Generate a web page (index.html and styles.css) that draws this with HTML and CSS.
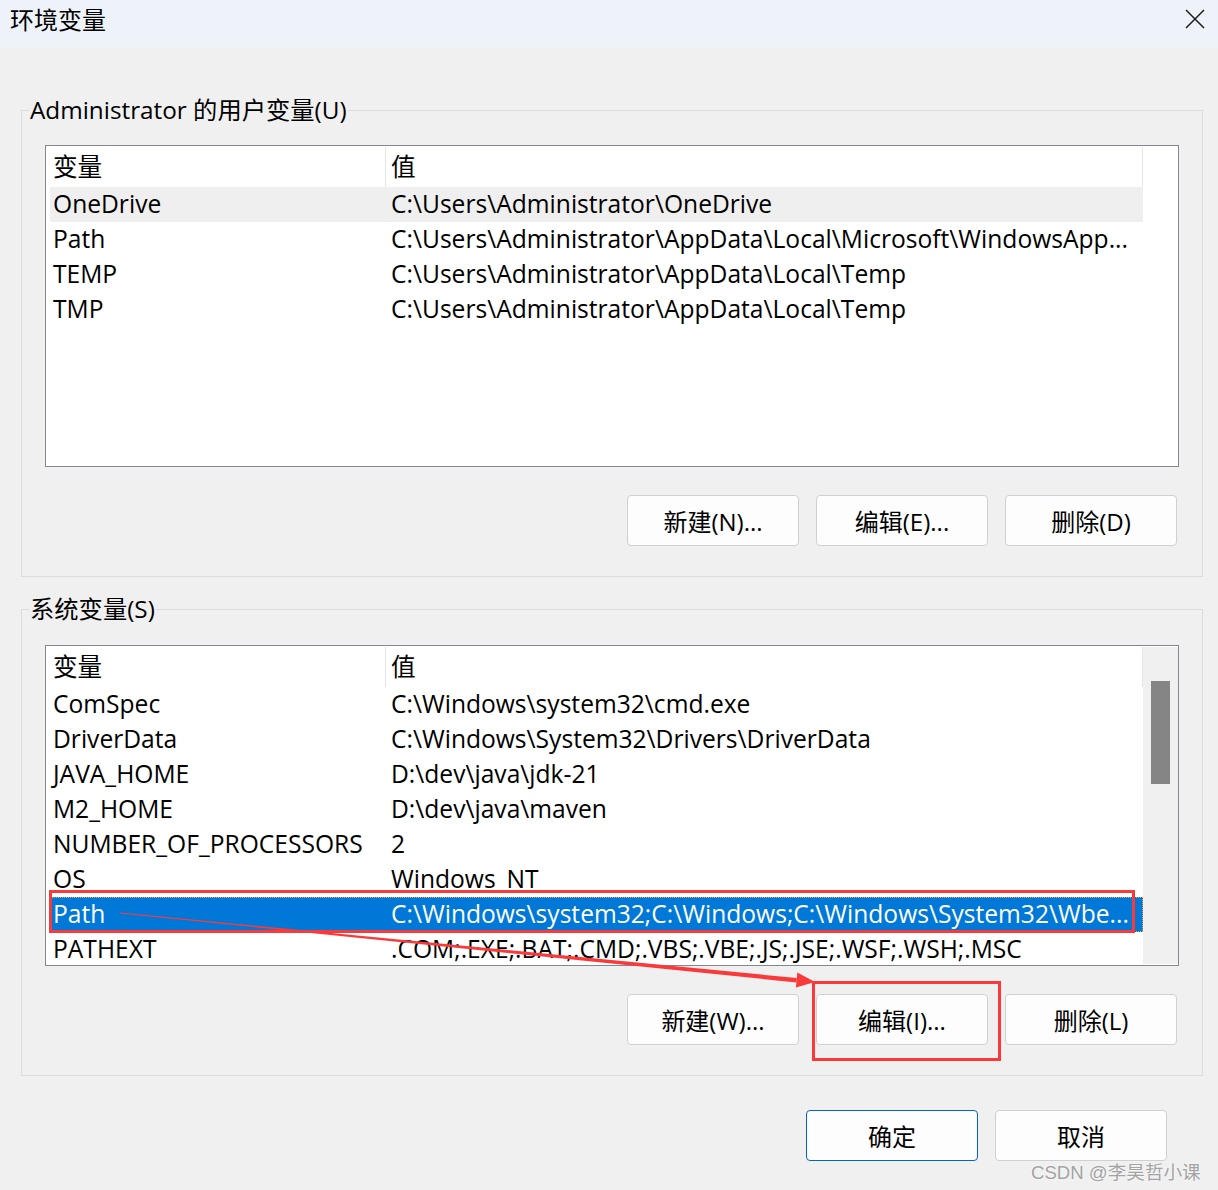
FILE: index.html
```html
<!DOCTYPE html>
<html lang="zh-CN">
<head>
    <meta charset="UTF-8">
    <title>环境变量</title>
    <link rel="stylesheet" href="styles.css">
</head>
<body>
    <div class="titlebar">
        <span class="title">环境变量</span>
        <svg class="close" width="20" height="20" viewBox="0 0 20 20">
            <path d="M1 1 L19 19 M19 1 L1 19" stroke="#1a1a1a" stroke-width="1.5" fill="none"/>
        </svg>
    </div>

    <div class="content">
        <fieldset class="group">
            <legend>Administrator 的用户变量(U)</legend>
            <div class="group-body">
                <div class="list list-user">
                    <div class="list-main">
                        <div class="list-head">
                            <div class="cell">变量</div>
                            <div class="cell cell-val">值</div>
                        </div>
                        <div class="row soft">
                            <div class="cell">OneDrive</div>
                            <div class="cell cell-val">C:\Users\Administrator\OneDrive</div>
                        </div>
                        <div class="row">
                            <div class="cell">Path</div>
                            <div class="cell cell-val">C:\Users\Administrator\AppData\Local\Microsoft\WindowsApp...</div>
                        </div>
                        <div class="row">
                            <div class="cell">TEMP</div>
                            <div class="cell cell-val">C:\Users\Administrator\AppData\Local\Temp</div>
                        </div>
                        <div class="row">
                            <div class="cell">TMP</div>
                            <div class="cell cell-val">C:\Users\Administrator\AppData\Local\Temp</div>
                        </div>
                    </div>
                    <div class="scroll"></div>
                </div>
                <div class="btn-row">
                    <button class="btn">新建(N)...</button>
                    <button class="btn">编辑(E)...</button>
                    <button class="btn">删除(D)</button>
                </div>
            </div>
        </fieldset>

        <fieldset class="group group-sys">
            <legend>系统变量(S)</legend>
            <div class="group-body">
                <div class="list list-sys">
                    <div class="list-main">
                        <div class="list-head">
                            <div class="cell">变量</div>
                            <div class="cell cell-val">值</div>
                        </div>
                        <div class="row">
                            <div class="cell">ComSpec</div>
                            <div class="cell cell-val">C:\Windows\system32\cmd.exe</div>
                        </div>
                        <div class="row">
                            <div class="cell">DriverData</div>
                            <div class="cell cell-val">C:\Windows\System32\Drivers\DriverData</div>
                        </div>
                        <div class="row">
                            <div class="cell">JAVA_HOME</div>
                            <div class="cell cell-val">D:\dev\java\jdk-21</div>
                        </div>
                        <div class="row">
                            <div class="cell">M2_HOME</div>
                            <div class="cell cell-val">D:\dev\java\maven</div>
                        </div>
                        <div class="row">
                            <div class="cell">NUMBER_OF_PROCESSORS</div>
                            <div class="cell cell-val">2</div>
                        </div>
                        <div class="row">
                            <div class="cell">OS</div>
                            <div class="cell cell-val">Windows_NT</div>
                        </div>
                        <div class="row selected">
                            <div class="cell">Path</div>
                            <div class="cell cell-val">C:\Windows\system32;C:\Windows;C:\Windows\System32\Wbe...</div>
                        </div>
                        <div class="row">
                            <div class="cell">PATHEXT</div>
                            <div class="cell cell-val">.COM;.EXE;.BAT;.CMD;.VBS;.VBE;.JS;.JSE;.WSF;.WSH;.MSC</div>
                        </div>
                    </div>
                    <div class="scroll scroll-bar">
                        <div class="thumb"></div>
                    </div>
                </div>
                <div class="btn-row">
                    <button class="btn">新建(W)...</button>
                    <button class="btn">编辑(I)...</button>
                    <button class="btn">删除(L)</button>
                </div>
            </div>
        </fieldset>

        <div class="footer">
            <button class="btn btn-default">确定</button>
            <button class="btn">取消</button>
        </div>
    </div>

    <!-- red markup drawn over the screenshot -->
    <svg class="marks" width="1218" height="1190" viewBox="0 0 1218 1190">
        <rect x="50.5" y="891.5" width="1083" height="40" fill="none" stroke="#fa3a3a" stroke-width="3"/>
        <rect x="813.5" y="982.5" width="186" height="77" fill="none" stroke="#fa3a3a" stroke-width="3"/>
        <polygon points="120,912.5 120,913.5 796.4,982.4 796.8,978" fill="#fa3a3a"/>
        <polygon points="797.3,972.6 815,982 795.9,987.6" fill="#fa3a3a"/>
    </svg>

    <div class="watermark">CSDN @李昊哲小课</div>
</body>
</html>
```

FILE: styles.css
```css
body {
    margin: 0;
    width: 1218px;
    height: 1190px;
    overflow: hidden;
    position: relative;
    background-color: #f0f0f0;
    font-family: "Open Sans", "Noto Sans CJK SC", sans-serif;
    font-size: 24px;
    color: #000;
}
.titlebar {
    height: 48px;
    background: #eef3fa;
    display: flex;
    justify-content: space-between;
    align-items: flex-start;
    padding: 0 13px 0 10px;
}
.title {
    line-height: 38px;
    font-family: "Noto Sans CJK SC", sans-serif;
}
.close {
    margin-top: 9px;
}
.content {
    padding: 0 15px 0 21px;
}
.group {
    margin: 47px 0 0;
    padding: 20px 0 30px;
    border: 1px solid #dcdcdc;
    min-width: 0;
}
.group-sys {
    margin-top: 17px;
    padding-top: 21px;
}
.group legend {
    margin-left: 7px;
    padding: 0 1px;
    line-height: 30px;
    font-size: 24.3px;
}
.group-body {
    padding: 0 23px;
}
.list {
    height: 322px;
    box-sizing: border-box;
    border: 1px solid #828790;
    background: #fff;
    display: flex;
    overflow: hidden;
    font-size: 24.6px;
}
.list-sys {
    height: 321px;
}
.list-main {
    flex: 1;
    min-width: 0;
    padding: 1px 0 0 4px;
}
.list-head, .row {
    display: grid;
    grid-template-columns: 336px 1fr;
}
.list-head {
    height: 40px;
    line-height: 39px;
}
.list-head .cell {
    border-right: 1px solid #e5e5e5;
    box-sizing: border-box;
}
.row {
    height: 35px;
    line-height: 34px;
}
.cell {
    padding-left: 3px;
    white-space: nowrap;
    overflow: hidden;
}
.cell-val {
    padding-left: 5px;
    padding-right: 2px;
}
.row.soft {
    background: #efefef;
}
.row.selected {
    background: #0078d7;
    color: #fff;
    outline: 1px dotted #e9a93f;
    outline-offset: -1px;
}
.scroll {
    width: 35px;
    margin-top: 1px;
}
.scroll-bar {
    background: #f0f0f0;
    margin-bottom: 1px;
}
.thumb {
    width: 19px;
    height: 103px;
    margin: 34px 0 0 8px;
    background: #858585;
}
.btn-row {
    display: flex;
    justify-content: flex-end;
    gap: 17px;
    margin-top: 28px;
    padding-right: 2px;
}
.btn {
    width: 172px;
    height: 51px;
    box-sizing: border-box;
    padding: 0;
    border: 1px solid #d0d0d0;
    border-radius: 4px;
    background: #fdfdfd;
    font-family: "Open Sans", "Noto Sans CJK SC", sans-serif;
    font-size: 24px;
    color: #000;
}
.btn-default {
    border-color: #0067c0;
}
.footer {
    display: flex;
    justify-content: flex-end;
    gap: 17px;
    margin-top: 34px;
    padding-right: 36px;
}
.marks {
    position: absolute;
    top: 0;
    left: 0;
    pointer-events: none;
}
.watermark {
    position: absolute;
    left: 1031px;
    top: 1157px;
    font-family: "Liberation Sans", "Noto Sans CJK SC", sans-serif;
    font-size: 18.6px;
    color: #a3a3a3;
    text-shadow: 0 0 2px #fff;
}
```
